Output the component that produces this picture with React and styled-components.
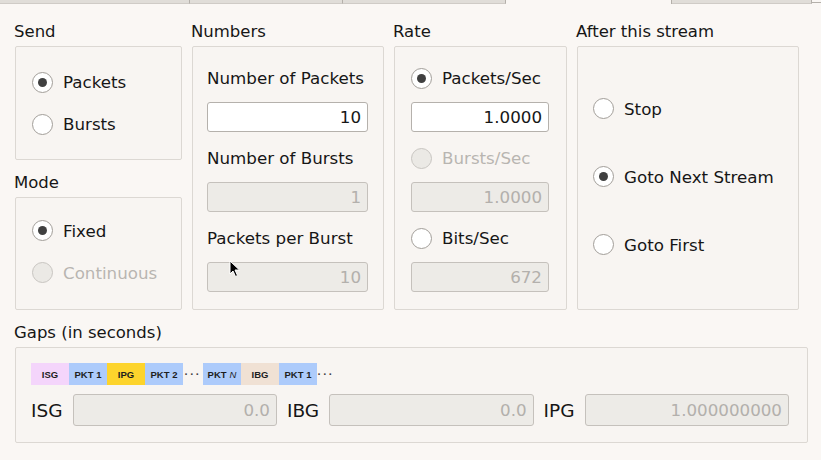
import styled, { createGlobalStyle } from 'styled-components';

const GlobalStyle = createGlobalStyle`
  html, body {
    margin: 0;
    padding: 0;
    background: #faf7f4;
  }
  body {
    font-family: 'DejaVu Sans', 'Liberation Sans', sans-serif;
    color: #161616;
  }
`;

const Page = styled.div`
  position: relative;
  width: 821px;
  height: 460px;
  overflow: hidden;
  background: #faf7f4;
`;

const TabStrip = styled.div`
  display: flex;
  height: 4px;
`;

const TabStub = styled.div`
  width: ${(p) => p.$w}px;
  box-sizing: border-box;
  background: ${(p) => (p.$active ? 'transparent' : '#e0ddd8')};
  border-right: 1px solid #b4b0aa;
  border-bottom: ${(p) => (p.$active ? 'none' : '1px solid #cfcbc6')};
`;

const TabCorner = styled.div`
  flex: 1;
  height: 3px;
  box-sizing: border-box;
  border-bottom: 1px solid #b4b0aa;
`;

const Content = styled.div`
  padding: 16px 0 0 15px;
  display: flex;
  flex-direction: column;
  gap: 11px;
`;

const Columns = styled.div`
  display: flex;
  gap: 10px;
`;

const Stack = styled.div`
  display: flex;
  flex-direction: column;
  gap: 11px;
`;

const Section = styled.section`
  display: flex;
  flex-direction: column;
`;

const Title = styled.div`
  height: 26px;
  line-height: 24px;
  margin-left: -1px;
  font-size: 16.5px;
`;

const GroupBox = styled.div`
  box-sizing: border-box;
  width: ${(p) => p.$w}px;
  height: ${(p) => p.$h}px;
  border: 1px solid #dcd8d3;
  border-radius: 2px;
  background: #f8f5f2;
  display: flex;
  flex-direction: column;
`;

const RadioList = styled.div`
  flex: 1;
  display: flex;
  flex-direction: column;
  justify-content: center;
  gap: ${(p) => p.$gap}px;
  padding-left: ${(p) => p.$left || 16}px;
  padding-bottom: ${(p) => p.$lift || 0}px;
`;

const FieldList = styled.div`
  display: flex;
  flex-direction: column;
  padding: ${(p) => p.$pad};
`;

const RadioRow = styled.label`
  display: flex;
  align-items: center;
  gap: 10px;
  height: ${(p) => p.$h || 30}px;
  font-size: 16.7px;
  color: ${(p) => (p.$disabled ? '#b8b5b1' : '#161616')};
`;

const Circle = styled.span`
  box-sizing: border-box;
  width: 21px;
  height: 21px;
  border-radius: 50%;
  border: 1px solid ${(p) => (p.$disabled ? '#c8c5c1' : '#a29e99')};
  background: ${(p) => (p.$disabled ? '#ebe9e5' : '#ffffff')};
  display: flex;
  align-items: center;
  justify-content: center;

  &::after {
    content: '';
    display: ${(p) => (p.$checked ? 'block' : 'none')};
    width: 9px;
    height: 9px;
    border-radius: 50%;
    background: #404040;
  }
`;

const FieldLabel = styled.div`
  height: 24px;
  line-height: 24px;
  font-size: 16.7px;
`;

const Input = styled.div`
  box-sizing: border-box;
  height: ${(p) => p.$h || 30}px;
  margin: 12px 0 14px;
  border: 1px solid ${(p) => (p.$disabled ? '#c5c1bc' : '#b5b1ac')};
  border-radius: 3px;
  background: ${(p) => (p.$disabled ? '#edebe7' : '#ffffff')};
  color: ${(p) => (p.$disabled ? '#b3b0ac' : '#161616')};
  font-size: 16.7px;
  display: flex;
  align-items: center;
  justify-content: flex-end;
  padding-right: 6px;
`;

const GapInput = styled(Input)`
  margin: 0;
`;

const GapsBody = styled.div`
  display: flex;
  flex-direction: column;
  gap: 9px;
  padding: 15px 18px 0 15px;
`;

const Diagram = styled.div`
  display: flex;
  height: 22px;
`;

const Segment = styled.div`
  width: 38px;
  background: ${(p) => p.$bg};
  display: flex;
  align-items: center;
  justify-content: center;
  font-family: 'Liberation Sans', Arial, sans-serif;
  font-weight: bold;
  font-size: 9.5px;
  color: #1e1e1e;

  i {
    font-weight: normal;
    margin-left: 3px;
  }
`;

const Dots = styled.div`
  width: ${(p) => p.$w}px;
  display: flex;
  align-items: center;
  justify-content: center;
  font-family: 'Liberation Sans', Arial, sans-serif;
  font-size: 11px;
  font-weight: bold;
  letter-spacing: 2px;
  color: #444;
`;

const GapGrid = styled.div`
  display: grid;
  grid-template-columns: auto 1fr auto 1fr auto 1fr;
  column-gap: 10px;
  align-items: center;
`;

const GapLabel = styled.span`
  font-size: 18.5px;
`;

const Cursor = styled.svg`
  position: absolute;
  left: 229px;
  top: 260px;
`;

const colors = {
  isg: '#f4d5fb',
  pkt: '#adcbfb',
  ipg: '#fdd42c',
  ibg: '#f0e1d4',
};

function Radio({ label, checked, disabled, h }) {
  return (
    <RadioRow $disabled={disabled} $h={h}>
      <Circle $checked={checked} $disabled={disabled} />
      {label}
    </RadioRow>
  );
}

export default function App() {
  return (
    <Page>
      <GlobalStyle />
      <TabStrip>
        <TabStub $w={190} />
        <TabStub $w={153} />
        <TabStub $w={163} />
        <TabStub $w={166} $active />
        <TabStub $w={140} />
        <TabCorner />
      </TabStrip>

      <Content>
        <Columns>
          <Stack>
            <Section>
              <Title>Send</Title>
              <GroupBox $w={167} $h={114}>
                <RadioList $gap={12}>
                  <Radio label="Packets" checked />
                  <Radio label="Bursts" />
                </RadioList>
              </GroupBox>
            </Section>
            <Section>
              <Title>Mode</Title>
              <GroupBox $w={167} $h={113}>
                <RadioList $gap={12} $lift={4}>
                  <Radio label="Fixed" checked />
                  <Radio label="Continuous" disabled />
                </RadioList>
              </GroupBox>
            </Section>
          </Stack>

          <Section>
            <Title>Numbers</Title>
            <GroupBox $w={192} $h={264}>
              <FieldList $pad="19px 15px 0 14px">
                <FieldLabel>Number of Packets</FieldLabel>
                <Input>10</Input>
                <FieldLabel>Number of Bursts</FieldLabel>
                <Input $disabled>1</Input>
                <FieldLabel>Packets per Burst</FieldLabel>
                <Input $disabled>10</Input>
              </FieldList>
            </GroupBox>
          </Section>

          <Section>
            <Title>Rate</Title>
            <GroupBox $w={173} $h={264}>
              <FieldList $pad="19px 17px 0 16px">
                <Radio label="Packets/Sec" checked h={24} />
                <Input>1.0000</Input>
                <Radio label="Bursts/Sec" disabled h={24} />
                <Input $disabled>1.0000</Input>
                <Radio label="Bits/Sec" h={24} />
                <Input $disabled>672</Input>
              </FieldList>
            </GroupBox>
          </Section>

          <Section>
            <Title>After this stream</Title>
            <GroupBox $w={222} $h={264}>
              <RadioList $gap={38} $left={15} $lift={3}>
                <Radio label="Stop" />
                <Radio label="Goto Next Stream" checked />
                <Radio label="Goto First" />
              </RadioList>
            </GroupBox>
          </Section>
        </Columns>

        <Section>
          <Title>Gaps (in seconds)</Title>
          <GroupBox $w={793} $h={96}>
            <GapsBody>
              <Diagram>
                <Segment $bg={colors.isg}>ISG</Segment>
                <Segment $bg={colors.pkt}>PKT 1</Segment>
                <Segment $bg={colors.ipg}>IPG</Segment>
                <Segment $bg={colors.pkt}>PKT 2</Segment>
                <Dots $w={20}>···</Dots>
                <Segment $bg={colors.pkt}>
                  PKT<i>N</i>
                </Segment>
                <Segment $bg={colors.ibg}>IBG</Segment>
                <Segment $bg={colors.pkt}>PKT 1</Segment>
                <Dots $w={18}>···</Dots>
              </Diagram>
              <GapGrid>
                <GapLabel>ISG</GapLabel>
                <GapInput $disabled $h={32}>0.0</GapInput>
                <GapLabel>IBG</GapLabel>
                <GapInput $disabled $h={32}>0.0</GapInput>
                <GapLabel>IPG</GapLabel>
                <GapInput $disabled $h={32}>1.000000000</GapInput>
              </GapGrid>
            </GapsBody>
          </GroupBox>
        </Section>
      </Content>

      <Cursor width="12" height="18" viewBox="0 0 12 18">
        <path d="M1 1 L1 14 L4 11 L6.5 16.5 L8.5 15.5 L6 10 L10.5 10 Z" fill="#000" stroke="#fff" strokeWidth="1" />
      </Cursor>
    </Page>
  );
}
